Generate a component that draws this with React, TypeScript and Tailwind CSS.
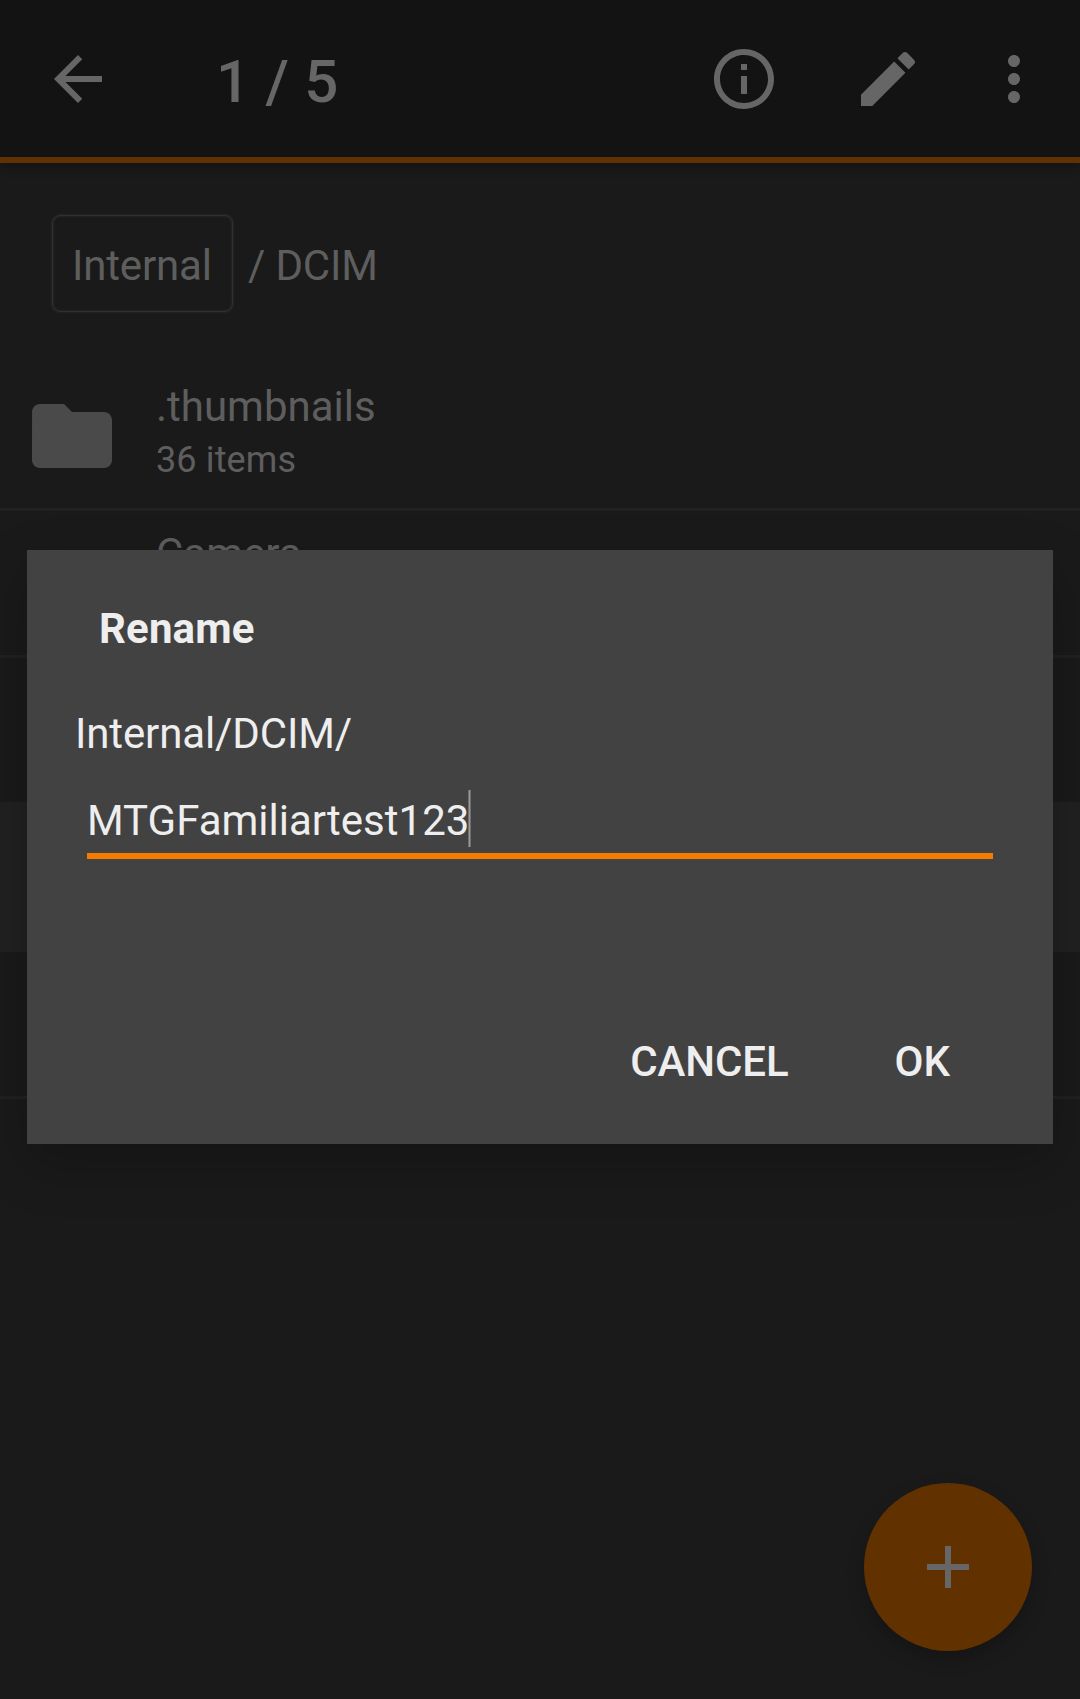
import React from "react";

function Icon({ d, className }: { d: string; className: string }) {
  return (
    <svg viewBox="0 0 24 24" fill="currentColor" className={className}>
      <path d={d} />
    </svg>
  );
}

const BACK = "M20 11H7.83l5.59-5.59L12 4l-8 8 8 8 1.41-1.41L7.83 13H20v-2z";
const INFO =
  "M11 17h2v-6h-2v6zm1-15C6.48 2 2 6.48 2 12s4.48 10 10 10 10-4.48 10-10S17.52 2 12 2zm0 18c-4.41 0-8-3.59-8-8s3.59-8 8-8 8 3.59 8 8-3.59 8-8 8zM11 9h2V7h-2v2z";
const EDIT =
  "M3 17.25V21h3.75L17.81 9.94l-3.75-3.75L3 17.25zM20.71 7.04c.39-.39.39-1.02 0-1.41l-2.34-2.34c-.39-.39-1.02-.39-1.41 0l-1.83 1.83 3.75 3.75 1.83-1.83z";
const MORE =
  "M12 8c1.1 0 2-.9 2-2s-.9-2-2-2-2 .9-2 2 .9 2 2 2zm0 2c-1.1 0-2 .9-2 2s.9 2 2 2 2-.9 2-2-.9-2-2-2zm0 6c-1.1 0-2 .9-2 2s.9 2 2 2 2-.9 2-2-.9-2-2-2z";
const FOLDER =
  "M10 4H4c-1.1 0-1.99.9-1.99 2L2 18c0 1.1.9 2 2 2h16c1.1 0 2-.9 2-2V8c0-1.1-.9-2-2-2h-8l-2-2z";
const PLUS = "M19 13h-6v6h-2v-6H5v-2h6V5h2v6h6v2z";

function Row({ name, detail, selected }: { name?: string; detail?: string; selected?: boolean }) {
  return (
    <li
      className={
        selected
          ? "-mt-[3px] flex h-[150px] items-start bg-[#212121] pl-6 pt-[3px]"
          : "flex h-[147px] items-start border-b-[3px] border-[#212121] pl-6"
      }
    >
      {name && (
        <>
          <Icon d={FOLDER} className="mt-6 size-24 shrink-0 text-[#4a4a4a]" />
          <div className="ml-9 pt-[18px] text-[#5e5e5e]">
            <div className="text-[42px] leading-[50px]">{name}</div>
            <div className="text-[36px] leading-[56px] tracking-[0.12px]">{detail}</div>
          </div>
        </>
      )}
    </li>
  );
}

export default function App() {
  return (
    <div className="relative h-[1699px] w-[1080px] overflow-hidden bg-[#1a1a1a] font-['Roboto',sans-serif]">
      <header className="flex h-[163px] items-start border-b-[6px] border-[#613100] bg-[#131313] pl-[42px] pr-[30px] pt-[43px] text-[#666666] shadow-[0_4px_10px_rgba(0,0,0,0.3)]">
        <Icon d={BACK} className="size-[72px]" />
        <h1 className="ml-[102px] text-[60px] font-medium leading-[77px] tracking-[0.2px]">1 / 5</h1>
        <div className="ml-auto flex">
          <Icon d={INFO} className="size-[72px]" />
          <Icon d={EDIT} className="ml-[72px] size-[72px]" />
          <Icon d={MORE} className="ml-[54px] size-[72px]" />
        </div>
      </header>

      <nav className="flex h-[201px] items-start pl-[52px] pt-[52px] text-[42px] leading-[50px] tracking-[-0.18px] text-[#5e5e5e]">
        <div className="h-[97px] w-[181px] rounded-[8px] border border-[#303030] pl-[19px] pt-[25px] shadow-[0_0_3px_#303030,inset_0_0_3px_#303030]">
          Internal
        </div>
        <div className="ml-[15px] pt-[26px]">/ DCIM</div>
      </nav>

      <ul>
        <Row name=".thumbnails" detail="36 items" />
        <Row name="Camera" detail="" />
        <Row />
        <Row selected />
        <Row />
      </ul>

      <button className="absolute bottom-[48px] right-[48px] flex size-[168px] items-center justify-center rounded-full bg-[#613100] text-[#666666] shadow-[0_8px_18px_rgba(0,0,0,0.22)]">
        <Icon d={PLUS} className="size-[72px]" />
      </button>

      <section className="absolute left-[27px] top-[550px] flex h-[594px] w-[1026px] flex-col bg-[#424242] px-[48px] text-[42px] leading-[50px] text-[#eeeeee] shadow-[0_20px_50px_rgba(0,0,0,0.22)]">
        <h2 className="mt-[54px] pl-6 font-bold tracking-[0.15px]">Rename</h2>
        <p className="mt-[55px] tracking-[-0.13px]">Internal/DCIM/</p>
        <div className="mx-3 mt-[31px] flex h-[69px] items-start border-b-[6px] border-[#f57c00]">
          <span className="pt-[6px]">MTGFamiliartest123</span>
          <span className="-ml-px h-[57px] w-[3px] border-x border-[#6f6f6f] bg-[#9a9a9a]" />
        </div>
        <div className="mb-[57px] mt-auto flex justify-end gap-[106px] pr-[55px] font-medium">
          <button className="tracking-[-0.1px]">CANCEL</button>
          <button>OK</button>
        </div>
      </section>
    </div>
  );
}
